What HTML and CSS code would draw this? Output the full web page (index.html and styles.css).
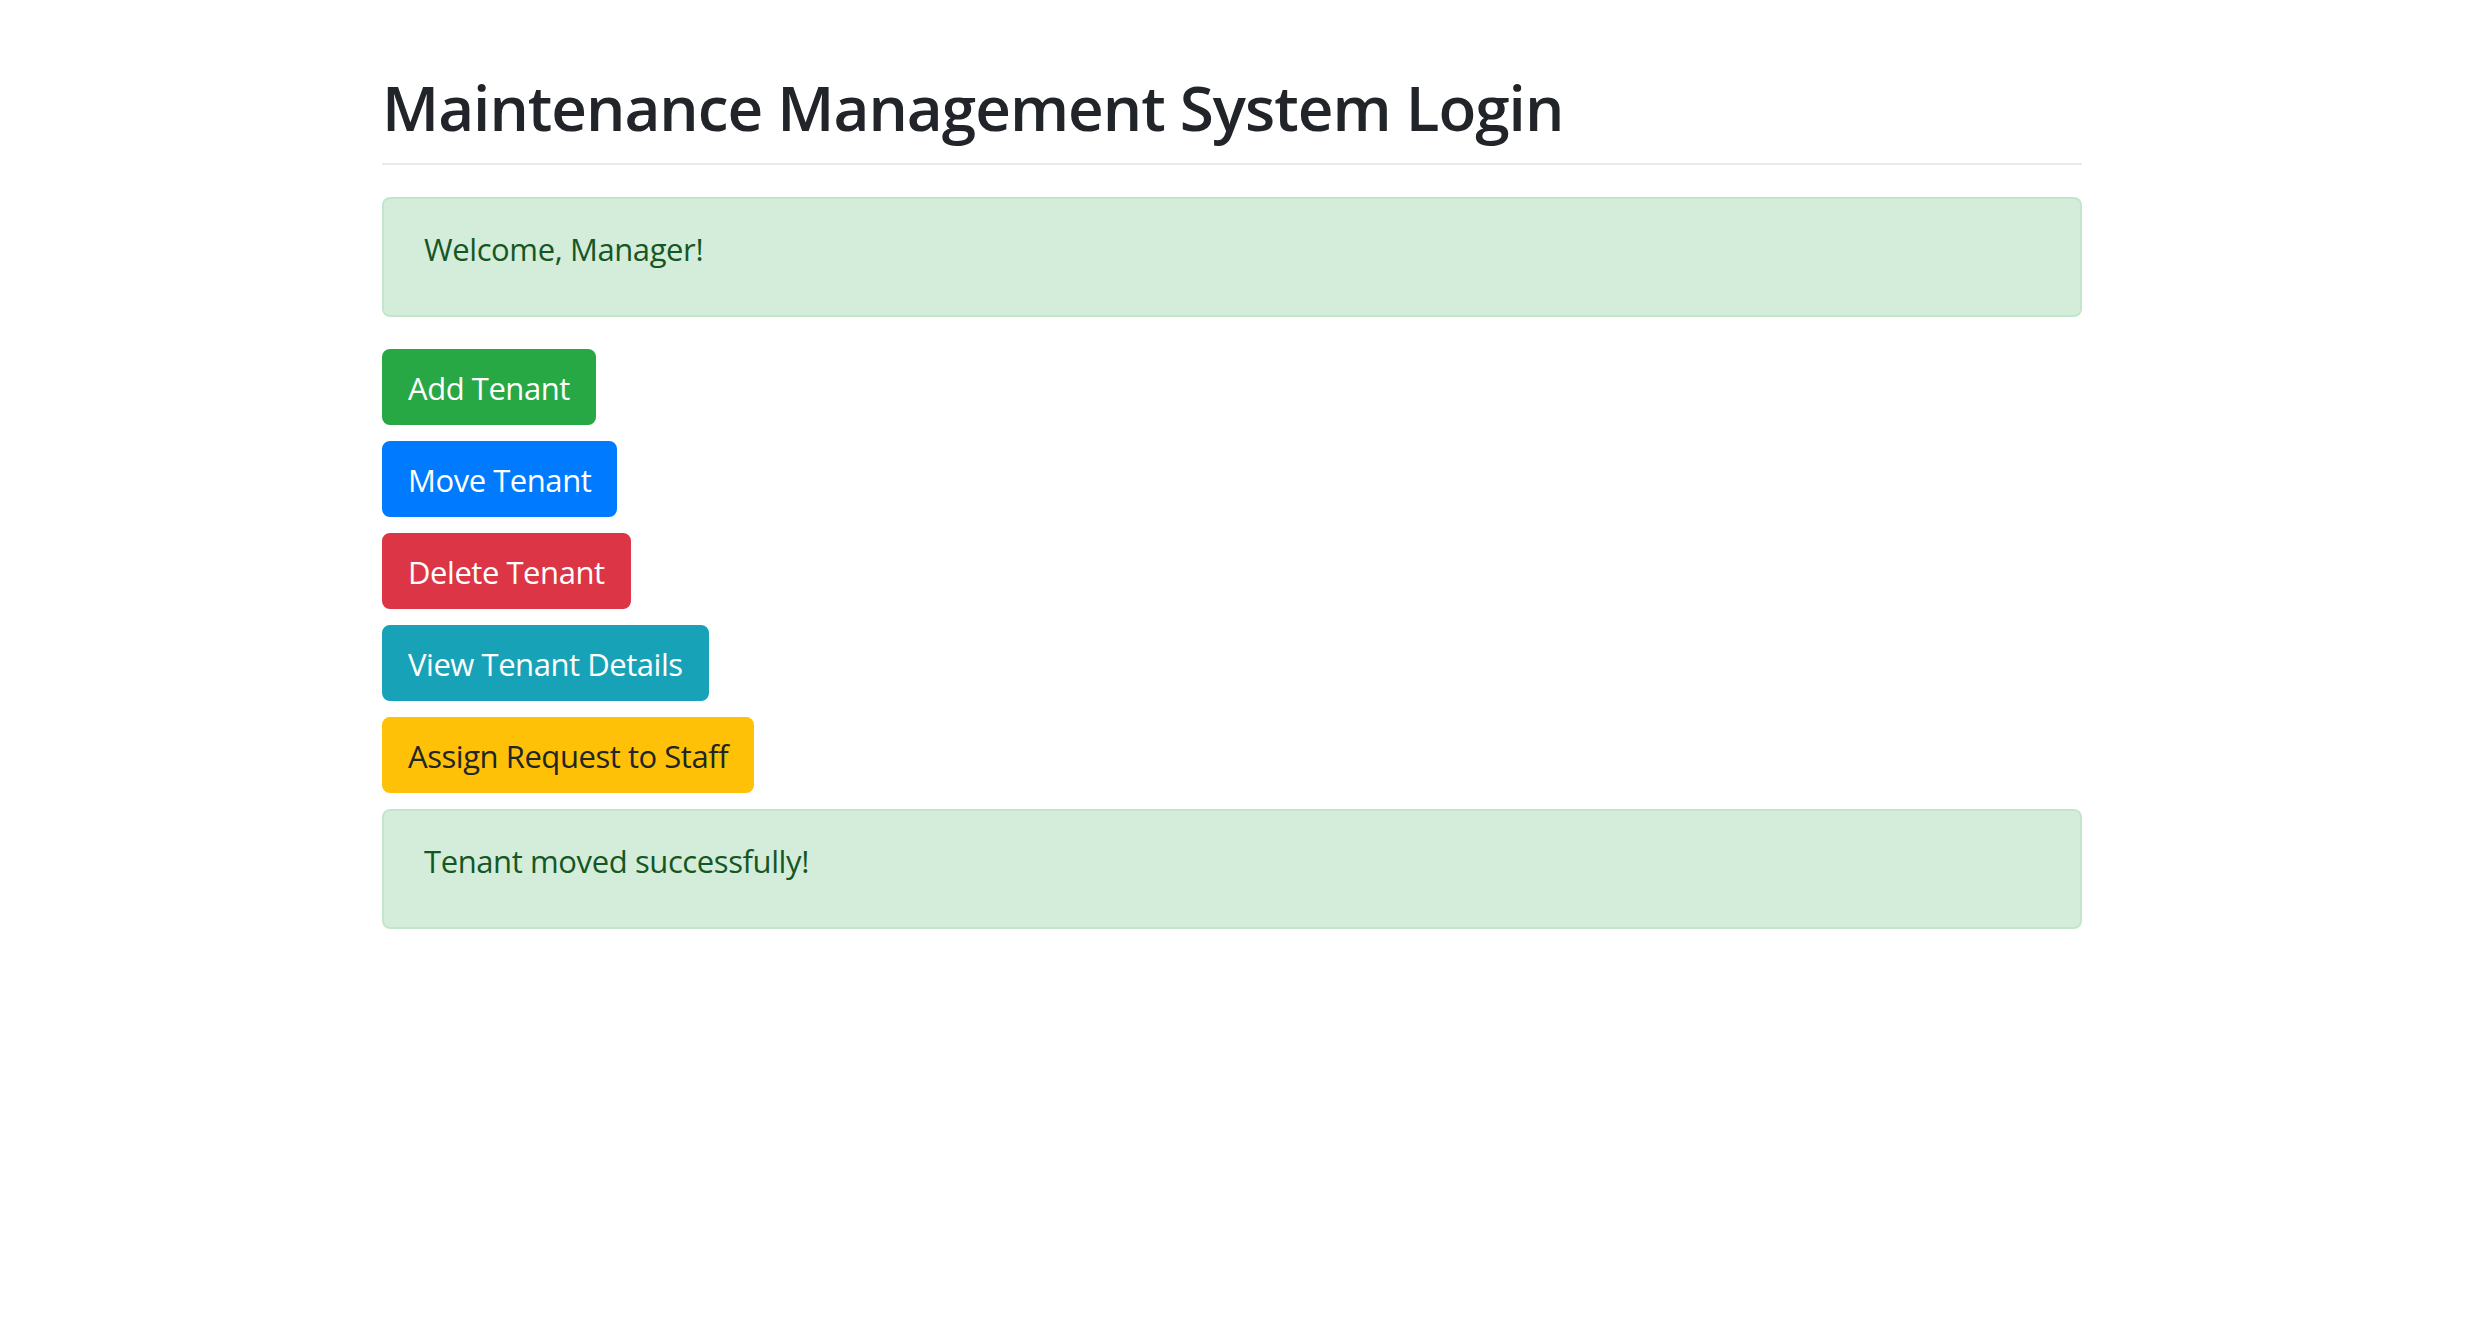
FILE: index.html
```html
<!DOCTYPE html>
<html lang="en">
<head>
<meta charset="utf-8">
<title>Maintenance Management System Login</title>
<link rel="stylesheet" href="styles.css">
</head>
<body>
<main class="container">
  <h1 class="title">Maintenance Management System Login</h1>
  <div class="alert">Welcome, Manager!</div>
  <div class="actions">
    <button class="btn btn-success" type="button">Add Tenant</button>
    <button class="btn btn-primary" type="button">Move Tenant</button>
    <button class="btn btn-danger" type="button">Delete Tenant</button>
    <button class="btn btn-info" type="button">View Tenant Details</button>
    <button class="btn btn-warning" type="button">Assign Request to Staff</button>
  </div>
  <div class="alert alert-last">Tenant moved successfully!</div>
</main>
</body>
</html>
```

FILE: styles.css
```css
html, body {
  margin: 0;
  padding: 0;
  background: #ffffff;
}

body {
  font-family: "Open Sans", "Noto Sans", "Liberation Sans", sans-serif;
  color: #212529;
}

.container {
  width: 1700px;
  margin-left: 382px;
  padding-top: 67px;
}

.title {
  margin: 0 0 32px 0;
  font-size: 62px;
  font-weight: 600;
  letter-spacing: -1px;
  line-height: 80px;
  color: #212529;
  padding-bottom: 16px;
  border-bottom: 2px solid #e9e9ef;
}

.alert {
  background: #d4edda;
  border: 2px solid #c3e6cb;
  border-radius: 8px;
  color: #155724;
  font-size: 31px;
  letter-spacing: -0.4px;
  line-height: 48px;
  padding: 26px 40px 42px 40px;
  margin-bottom: 32px;
}

.actions {
  display: flex;
  flex-direction: column;
  align-items: flex-start;
  gap: 16px;
  margin-bottom: 16px;
}

.btn {
  font-family: inherit;
  font-size: 31px;
  letter-spacing: -0.45px;
  line-height: 48px;
  padding: 13px 24px 11px 24px;
  border: 2px solid transparent;
  border-radius: 8px;
  color: #ffffff;
  cursor: pointer;
}

.btn-success { background: #28a745; border-color: #28a745; }
.btn-primary { background: #007bff; border-color: #007bff; }
.btn-danger { background: #dc3545; border-color: #dc3545; }
.btn-info { background: #17a2b8; border-color: #17a2b8; }
.btn-warning { background: #ffc107; border-color: #ffc107; color: #212529; }
```
